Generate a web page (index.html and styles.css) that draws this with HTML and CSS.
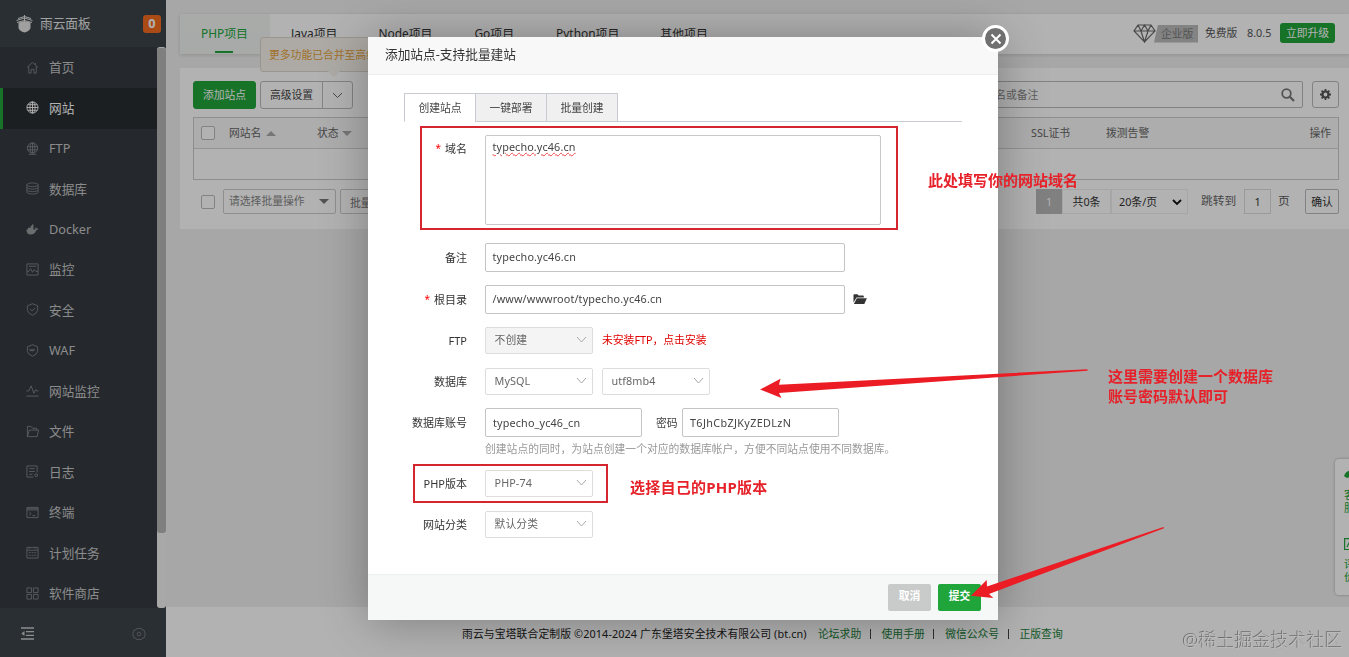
FILE: index.html
```html
<!DOCTYPE html>
<html lang="zh-CN">
<head>
  <meta charset="UTF-8">
  <title>雨云面板</title>
  <link rel="stylesheet" href="styles.css">
</head>
<body>
  <div class="app">
    <aside class="sidebar">
      <div class="logo">
        <svg width="17" height="18" viewBox="0 0 17 18"><path d="M2.500 7.500 8.500 6l6 1.500v5.500q-1 3-6 4.500Q3.500 16 2.500 13z" fill="#e4e4e4"/><path d="M.5 5.500 8.500 3l8 2.500M2 3.500 8.500 1.500 15 3.500M8.500 0v6M1 7.500l7.500-2 7.500 2" fill="none" stroke="#e4e4e4"/></svg>
        <span class="name">雨云面板</span>
        <span class="msg">0</span>
      </div>
      <div class="menu">
        <ul>
          <li><svg viewBox="0 0 14 14"><path d="M1 7 7 1.500 13 7M3 6v7h2.500V9h3v4H11V6M10 2v2"/></svg>首页</li>
          <li class="active"><svg viewBox="0 0 14 14"><circle cx="7" cy="7" r="6"/><ellipse cx="7" cy="7" rx="2.800" ry="6"/><path d="M7 1v12M1 7h12M2 4h10M2 10h10"/></svg>网站</li>
          <li><svg viewBox="0 0 14 14"><circle cx="7" cy="6.500" r="5.500"/><ellipse cx="7" cy="6.500" rx="2.500" ry="5.500"/><path d="M1.500 5h11M1.500 8.500h11M3 13.300h8M7 1v11"/></svg>FTP</li>
          <li><svg viewBox="0 0 14 14"><ellipse cx="7" cy="3" rx="6" ry="2"/><path d="M1 3v8c0 2.600 12 2.600 12 0V3M1 5.700c0 2.600 12 2.600 12 0M1 8.400c0 2.600 12 2.600 12 0"/></svg>数据库</li>
          <li><svg viewBox="0 0 14 14"><path d="M.5 7H10q.3-1.500-.3-2.500 1.500.3 1.800 1.500 1.200-.2 2 .3-.8 1.500-2.500 1.500-1.500 4.700-6 4.700Q.5 12.500.5 7zM2 5h6v2H2zM5 3h3v2H5zM6.500 1.500H8V3H6.500z" fill="#9a9d9f" stroke="none"/></svg>Docker</li>
          <li><svg viewBox="0 0 14 14"><path d="M1 1h12v12H1zM1 9h2l2-3 2 4 2-3 1.500 2H13M3 3.500h8"/></svg>监控</li>
          <li><svg viewBox="0 0 14 14"><path d="M7 .8 12.500 3v5Q11.500 11.500 7 13.200 2.500 11.500 1.500 8V3zM4.500 6.500l2 2 3.200-3"/></svg>安全</li>
          <li><svg viewBox="0 0 14 14"><path d="M7 .8 12.500 3v5Q11.500 11.500 7 13.200 2.500 11.500 1.500 8V3zM4 5.200l.8 2.500.9-2 .8 2 .9-2 .8 2 .8-2.500"/></svg>WAF</li>
          <li><svg viewBox="0 0 14 14"><path d="M.5 13h13M.5 7.500H3l2.500-5.500 3 8L10.500 6l1 1.500h2"/></svg>网站监控</li>
          <li><svg viewBox="0 0 14 14"><path d="M1.500 12.500V1.500h4L7 3.500h4.500V5.500M1.500 12.500 3.500 5.500h10L12 12.500z"/></svg>文件</li>
          <li><svg viewBox="0 0 14 14"><path d="M12 8V1H1v12h7M3.500 4h6M3.500 7h6M3.500 10H7"/><circle cx="11" cy="11" r="1.500"/></svg>日志</li>
          <li><svg viewBox="0 0 14 14"><path d="M1 1.500h12v11H1zM1 3h12M1 4.200h12M3.500 6.500l2 1.700-2 1.800M7 10.300h3"/></svg>终端</li>
          <li><svg viewBox="0 0 14 14"><path d="M1 1.500h12v11.500H1zM1 4.500h12M3 7.200h2M6 7.200h2M9 7.200h2M3 10h2M6 10h2M9 10h2M4 1.500v1.500M10 1.500v1.500"/></svg>计划任务</li>
          <li><svg viewBox="0 0 14 14"><path d="M1 1h5v5H1zM8 1h5v5H8zM1 8h5v5H1zM8 8h5v5H8z"/></svg>软件商店</li>
        </ul>
        <div class="scrollbar"><div class="thumb"></div></div>
      </div>
      <div class="side-foot">
        <svg width="13" height="13" viewBox="0 0 13 13"><path d="M0 1h13M5 4.700h8M5 8.300h8M0 12h13" stroke="#c8caca" stroke-width="1.300"/><path d="M3.500 4v5L.3 6.500z" fill="#c8caca"/></svg>
        <svg width="14" height="14" viewBox="0 0 14 14"><path d="M4.500 1.500h5l.8 1.500h1.700L13.300 7 12 11h-1.700l-.8 1.500h-5L3.700 11H2L.7 7 2 3h1.700z" fill="none" stroke="#717679"/><circle cx="7" cy="7" r="1.800" fill="none" stroke="#717679"/></svg>
      </div>
    </aside>

    <div class="main">
      <div class="topbar">
        <div class="tabs">
          <span class="on">PHP项目</span><span>Java项目</span><span>Node项目</span><span>Go项目</span><span>Python项目</span><span>其他项目</span>
        </div>
        <div class="version">
          <svg width="23" height="19" viewBox="0 0 23 19"><path d="M5 1h13l4 6-10.500 11L1 7zM1 7h21M5 1l3 6 3.500 11L15 7l3-6M8 7l3.500-6L15 7" fill="none" stroke="#6b6b6b" stroke-width="1.200"/></svg>
          <span class="ent">企业版</span>
          <span class="free">免费版</span>
          <span class="num">8.0.5</span>
          <span class="upgrade">立即升级</span>
        </div>
      </div>

      <div class="card">
        <div class="tip">更多功能已合并至高级</div>
        <div class="tools">
          <button class="btn green">添加站点</button>
          <button class="btn setting">高级设置</button>
          <button class="btn more"><svg width="11" height="7" viewBox="0 0 11 7"><path d="M1 1l4.500 4.500L10 1" fill="none" stroke="#666"/></svg></button>
          <div class="search">
            <span>请输入域名或备注</span>
            <svg width="14" height="14" viewBox="0 0 14 14"><circle cx="5.500" cy="5.500" r="4.300" fill="none" stroke="#777" stroke-width="1.800"/><path d="M8.800 8.800 13 13" stroke="#777" stroke-width="2.200"/></svg>
          </div>
          <div class="gear"><svg width="11" height="11" viewBox="0 0 11 11"><circle cx="5.500" cy="5.500" r="3" fill="none" stroke="#555" stroke-width="2.200"/><path d="M5.500 0v2M5.500 9v2M0 5.500h2M9 5.500h2M1.600 1.600l1.200 1.200M8.200 8.200l1.200 1.200M1.600 9.400l1.200-1.200M8.200 2.800l1.200-1.200" stroke="#555" stroke-width="1.800"/></svg></div>
        </div>
        <div class="table">
          <div class="thead">
            <i class="check"></i>
            <span class="c-name">网站名 <i class="up"></i></span>
            <span class="c-status">状态 <i class="down"></i></span>
            <span class="c-ssl">SSL证书</span>
            <span class="c-alarm">拨测告警</span>
            <span class="c-op">操作</span>
          </div>
        </div>
        <div class="batch">
          <i class="check"></i>
          <div class="bsel">请选择批量操作<i class="down"></i></div>
          <div class="bbtn">批量操作</div>
          <div class="page">
            <span class="cur">1</span>
            <span class="total">共0条</span>
            <span class="size">20条/页 <svg width="10" height="7" viewBox="0 0 10 7"><path d="M1 1l4 4 4-4" fill="none" stroke="#111" stroke-width="1.800"/></svg></span>
            <span class="jump">跳转到</span>
            <span class="pnum">1</span>
            <span class="ye">页</span>
            <span class="ok">确认</span>
          </div>
        </div>
      </div>

      <footer class="footer">
        <span class="copy">雨云与宝塔联合定制版 ©2014-2024 广东堡塔安全技术有限公司 (bt.cn)</span>
        <a>论坛求助</a><i></i><a>使用手册</a><i></i><a>微信公众号</a><i></i><a>正版查询</a>
      </footer>
    </div>
  </div>

  <div class="kefu">
    <svg width="14" height="12" viewBox="0 0 14 12"><path d="M0 6q2-5.500 7-5.500T14 6l-3 2Q7 2.500 5 6v1l-1 1q-2 0-4-2zM2 8l2 3" fill="#20a53a"/></svg>
    <p>客服</p>
    <svg class="s2" width="12" height="12" viewBox="0 0 12 12"><path d="M.6.6h11v11H.6zM3 9l2-4 2 4" fill="none" stroke="#20a53a" stroke-width="1.200"/></svg>
    <p>评价</p>
  </div>

  <div class="shade"></div>

  <div class="modal">
    <div class="title">添加站点-支持批量建站</div>
    <div class="close"><svg width="12" height="12" viewBox="0 0 12 12"><path d="M1.500 1.500l9 9M10.500 1.500l-9 9" stroke="#fff" stroke-width="2"/></svg></div>
    <div class="body">
      <div class="mtabs"><span class="on">创建站点</span><span>一键部署</span><span>批量创建</span></div>
      <div class="row r-domain">
        <label><b>*</b>域名</label>
        <div class="area"><span>typecho.yc46.cn</span></div>
      </div>
      <div class="row r-ps">
        <label>备注</label>
        <div class="input long">typecho.yc46.cn</div>
      </div>
      <div class="row r-path">
        <label><b>*</b>根目录</label>
        <div class="input long">/www/wwwroot/typecho.yc46.cn</div>
        <svg class="folder" width="14" height="11" viewBox="0 0 14 11"><path d="M.5 8.500V1q0-.7.700-.7h3.300l1 1.200h4.500q.8 0 .8.800v1.200H3.500z" fill="#333"/><path d="M3.800 4.300h10L11.300 10H.9z" fill="#333"/></svg>
      </div>
      <div class="row r-ftp">
        <label>FTP</label>
        <div class="select disabled">不创建<svg class="arr" viewBox="0 0 11 7"><path d="M1 1l4.500 5L10 1"/></svg></div>
        <span class="warn">未安装FTP，点击安装</span>
      </div>
      <div class="row r-db">
        <label>数据库</label>
        <div class="select">MySQL<svg class="arr" viewBox="0 0 11 7"><path d="M1 1l4.500 5L10 1"/></svg></div>
        <div class="select second">utf8mb4<svg class="arr" viewBox="0 0 11 7"><path d="M1 1l4.500 5L10 1"/></svg></div>
      </div>
      <div class="row r-user">
        <label>数据库账号</label>
        <div class="input account">typecho_yc46_cn</div>
        <span class="pw">密码</span>
        <div class="input account wide">T6JhCbZJKyZEDLzN</div>
      </div>
      <div class="help">创建站点的同时，为站点创建一个对应的数据库帐户，方便不同站点使用不同数据库。</div>
      <div class="row r-php">
        <label>PHP版本</label>
        <div class="select">PHP-74<svg class="arr" viewBox="0 0 11 7"><path d="M1 1l4.500 5L10 1"/></svg></div>
      </div>
      <div class="row r-type">
        <label>网站分类</label>
        <div class="select">默认分类<svg class="arr" viewBox="0 0 11 7"><path d="M1 1l4.500 5L10 1"/></svg></div>
      </div>
    </div>
    <div class="foot"><button class="cancel">取消</button><button class="submit">提交</button></div>
  </div>

  <!-- 标注 -->
  <div class="mark m-domain"></div>
  <div class="mark m-php"></div>
  <p class="note n-domain">此处填写你的网站域名</p>
  <p class="note n-db">这里需要创建一个数据库<br>账号密码默认即可</p>
  <p class="note n-php">选择自己的PHP版本</p>
  <svg class="arrows" width="1349" height="657" viewBox="0 0 1349 657">
    <path d="M760 389.500 780.500 378.700 779 384.700 1087.500 369.300V370.700L779 393 781.500 398z"/>
    <path d="M971 595.700 986.700 580 987 586.500 1163.500 527 1164 528.300 989 594 993.300 598z"/>
  </svg>
  <div class="watermark">@稀土掘金技术社区</div>
</body>
</html>
```
FILE: styles.css
```css
* { box-sizing: border-box; }
body { margin: 0; width: 1349px; height: 657px; overflow: hidden; position: relative; background: #f0f0f0; color: #555; font: 10.8px/16px "Noto Sans", "Noto Sans CJK SC", sans-serif; white-space: nowrap; }
p, ul { margin: 0; padding: 0; }
li { list-style: none; }
button { font: inherit; padding: 0; }
.app { display: flex; height: 657px; }

/* 左侧菜单 */
.sidebar { width: 166px; flex: none; display: flex; flex-direction: column; background: #3d4449; color: #c8c8c8; font-size: 12.7px; }
.logo { height: 47px; display: flex; align-items: center; padding: 0 5px 0 16px; }
.logo .name { margin: -2px 0 0 7px; color: #e8e8e8; }
.logo .msg { margin-left: auto; width: 18px; height: 18px; border-radius: 3px; background: #f46b1d; color: #fff; font-weight: bold; line-height: 17px; text-align: center; }
.menu { height: 561px; display: flex; background: #353b42; }
.menu ul { width: 157px; padding-top: 1px; }
.menu li { height: 40.46px; display: flex; align-items: center; padding: 0 0 2px 26px; }
.menu li svg { width: 13px; height: 13px; margin: 0 10px 0 0; fill: none; stroke: #80868a; }
.menu li.active { background: #282d32; color: #fff; box-shadow: inset 3px 0 #20a53a; }
.menu li.active svg { stroke: #fff; }
.scrollbar { width: 9px; padding-top: 1px; background: #f1f1f1; border-radius: 3px; }
.thumb { height: 485px; background: #b7b7b7; border-radius: 3px; }
.side-foot { flex: 1; display: flex; align-items: center; justify-content: space-between; padding: 2px 20px 0 21px; }

/* 顶部 */
.main { flex: 1; display: flex; flex-direction: column; padding-top: 14px; }
.topbar { height: 40px; margin-left: 14px; display: flex; justify-content: space-between; background: #fff; box-shadow: 0 1px 4px rgba(0,0,0,.15); }
.tabs { display: flex; color: #333; font-size: 11.9px; }
.tabs span { padding: 0 20px 0 21px; line-height: 39px; }
.tabs .on { width: 90px; padding: 0 0 0 21px; color: #20a53a; background: linear-gradient(#f3f5f4, #eff4f0); }
.tabs .on::after { content: ""; display: block; width: 18px; height: 2px; margin: -2px 0 0 14px; background: #20a53a; }
.tabs span:nth-child(4), .tabs span:nth-child(5) { padding-left: 22px; }
.version { display: flex; align-items: center; padding: 0 14px 2px 0; }
.ent { width: 44px; height: 18px; margin: 1px 7px 0 -2px; line-height: 18px; padding-left: 7px; background: #bcbcbc; color: #777; clip-path: polygon(4px 0, 100% 0, 100% 100%, 0 100%); }
.free { width: 42px; }
.num { width: 33px; }
.upgrade { width: 55px; height: 20px; line-height: 19px; border-radius: 3px; background: #20a53a; color: #fff; text-align: center; }

/* 内容 */
.card { position: relative; height: 161px; margin: 14px 0 0 14px; padding: 13px 10px 0 13px; background: #fff; }
.tip { position: absolute; left: 80px; top: -31px; width: 150px; height: 35px; padding-left: 8px; line-height: 34px; background: #f8f4ec; border: 1px solid #ddd7cd; border-radius: 3px; color: #e6a23c; }
.tip::after { content: ""; position: absolute; left: 67px; top: 33px; border: 6px solid transparent; border-top-color: #f8f4ec; }
.tools { display: flex; height: 28px; }
.btn { height: 28px; border: 1px solid #bbb; border-radius: 3px; background: #fff; color: #444; }
.btn.green { width: 63px; margin-right: 4px; background: #20a53a; border-color: #20a53a; color: #fff; }
.btn.setting { width: 63px; border-radius: 3px 0 0 3px; }
.btn.more { width: 31px; margin-left: -1px; border-radius: 0 3px 3px 0; }
.search { width: 352px; height: 27px; margin: 0 9px 0 auto; display: flex; align-items: center; justify-content: space-between; padding: 0 7px 0 0; border: 1px solid #bbb; border-radius: 2px; color: #888; }
.gear { width: 27px; height: 27px; display: flex; align-items: center; justify-content: center; border: 1px solid #bbb; border-radius: 3px; }
.table { height: 63px; margin-top: 8px; border: 1px solid #ccc; color: #666; }
.thead { height: 31px; display: flex; align-items: center; padding: 0 7px; border-bottom: 1px solid #d5d5d5; background: #f8f8f8; }
.check { width: 14px; height: 14px; flex: none; border: 1px solid #bbb; border-radius: 2px; background: #fff; }
.up, .down { display: inline-block; border: 5px solid transparent; vertical-align: middle; }
.up { border-bottom-color: #aaa; margin: -7px 0 0 2px; }
.down { border-top-color: #aaa; margin: 4px 0 0 1px; }
.c-name { width: 88px; margin-left: 14px; }
.c-status { width: 714px; }
.c-ssl { width: 75px; }
.c-op { margin-left: auto; }
.batch { display: flex; align-items: center; height: 25px; margin-top: 9px; padding-left: 8px; }
.bsel { width: 113px; height: 25px; line-height: 21px; margin: 0 4px 0 8px; padding: 0 6px 0 5px; display: flex; justify-content: space-between; border: 1px solid #ccc; border-radius: 2px; color: #888; }
.bsel .down { border-top-color: #777; margin-top: 9px; }
.bbtn { width: 60px; height: 25px; line-height: 25px; padding-left: 9px; border: 1px solid #ccc; border-radius: 2px; color: #777; }
.page { display: flex; margin-left: auto; line-height: 25px; color: #333; }
.page span { height: 25px; }
.page .cur { width: 26px; background: #b8b8b8; color: #fff; text-align: center; }
.page .total { width: 49px; text-align: center; border: 1px solid #eee; line-height: 24px; }
.page .size { width: 77px; padding-left: 7px; border: 1px solid #eee; line-height: 24px; }
.size svg { margin-left: 12px; }
.page .jump { width: 56px; padding-left: 13px; color: #666; line-height: 23px; font-size: 11.7px; }
.page .pnum { width: 27px; border: 1px solid #ddd; text-align: center; line-height: 24px; }
.page .ye { width: 34px; padding-left: 7px; line-height: 23px; color: #555; font-size: 11.7px; }
.page .ok { width: 34px; border: 1px solid #bbb; border-radius: 2px; text-align: center; line-height: 23px; }
.footer { height: 50px; margin-top: auto; display: flex; align-items: center; padding: 3px 0 0 296px; background: #fff; color: #222; }
.copy { width: 356px; letter-spacing: .12px; }
.footer a { color: #20803a; }
.footer i { width: 1px; height: 10px; margin: 0 11px 0 8.4px; background: #444; }
.kefu { position: absolute; left: 1335px; top: 459px; width: 40px; height: 136px; padding: 11px 0 0 9px; background: #fff; border-radius: 4px; box-shadow: 0 0 3px rgba(0,0,0,.3); color: #20a53a; line-height: 13px; }
.kefu svg { display: block; margin-bottom: 6px; }
.kefu p { width: 12px; white-space: normal; }
.kefu .s2 { margin: 24px 0 7px; }

/* 弹窗 */
.shade { position: fixed; left: 0; top: 0; width: 100%; height: 100%; background: #000; opacity: .3; }
.modal { position: absolute; left: 368px; top: 37px; width: 630px; height: 583px; display: flex; flex-direction: column; background: #fff; box-shadow: 1px 1px 45px rgba(0,0,0,.3); color: #444; }
.title { height: 38px; padding-left: 17px; line-height: 35px; font-size: 12.7px; background: #f8f8f8; border-bottom: 1px solid #eee; color: #333; }
.close { position: absolute; right: -11px; top: -12px; width: 27px; height: 27px; display: flex; align-items: center; justify-content: center; border: 3px solid #fff; border-radius: 50%; background: #707070; }
.body { flex: 1; padding-top: 18px; }
.mtabs { width: 558px; height: 29px; margin-left: 36px; display: flex; border-bottom: 1px solid #c8ccd2; }
.mtabs span { width: 72px; height: 29px; margin-right: -1px; line-height: 28px; text-align: center; background: #f0f0f1; border: 1px solid #c8ccd2; }
.mtabs .on { background: #fff; border-bottom-color: #fff; }
.row { display: flex; align-items: center; }
.row label { width: 99px; margin-right: 18px; text-align: right; color: #333; font-size: 11px; }
.row label b { margin-right: 4px; color: #f00; font-weight: normal; font-size: 10px; vertical-align: 1px; }
.r-domain { align-items: flex-start; margin-top: 13px; }
.r-domain label { margin-top: 5px; }
.area { width: 396px; height: 90px; padding: 3px 6.5px; border: 1px solid #c8c8cc; border-radius: 2px; letter-spacing: .12px; }
.area span { text-decoration: underline wavy #e44 .6px; text-underline-offset: 1px; }
.input { width: 157px; height: 29px; padding-left: 7px; line-height: 26px; border: 1px solid #c4c4c4; border-radius: 2px; letter-spacing: .15px; }
.input.long { width: 360px; line-height: 25px; padding-left: 6.5px; }
.input.account { line-height: 27px; }
.input.wide { letter-spacing: .36px; }
.folder { margin-left: 8px; }
.r-ps { margin-top: 18px; }
.r-path, .r-ftp { margin-top: 13px; }
.select { width: 108px; height: 27px; padding: 0 5px 2px 8.5px; display: flex; align-items: center; justify-content: space-between; border: 1px solid #ddd; border-radius: 2px; color: #666; letter-spacing: .1px; }
.select.disabled { background: #f4f4f4; }
.select.second { margin-left: 9px; }
.arr { width: 11px; height: 7px; fill: none; stroke: #aaa; }
.warn { margin: -2px 0 0 9px; color: #e00000; }
.r-db { margin-top: 14px; }
.r-user { margin-top: 13px; }
.pw { width: 22px; margin: 0 4px 0 14px; }
.help { height: 16px; margin: 4px 0 0 117px; color: #999; }
.r-php { margin-top: 13px; }
.r-type { margin-top: 14px; }
.foot { height: 46px; display: flex; justify-content: flex-end; padding: 9px 17px 0 0; background: #f6f8f8; border-top: 1px solid #edf0f0; }
.foot button { width: 43px; height: 27px; margin-left: 7px; padding-bottom: 3px; border: 0; border-radius: 2px; color: #fff; font-weight: bold; }
.cancel { background: #c9cbcb; }
.submit { background: #20a53a; }

.mark { position: absolute; border: 2px solid #d5262f; }
.m-domain { left: 420px; top: 126px; width: 478px; height: 104px; }
.m-php { left: 413px; top: 464px; width: 195px; height: 39px; }
.note { position: absolute; color: #e62129; font-size: 15px; line-height: 19.5px; font-weight: bold; }
.n-domain { left: 928px; top: 171px; }
.n-db { left: 1108px; top: 367px; }
.n-php { left: 630px; top: 478px; letter-spacing: .25px; }
.arrows { position: absolute; left: 0; top: 0; fill: #ec1c24; }
.watermark { position: absolute; left: 1183px; top: 628px; font-size: 18px; line-height: 24px; font-weight: 300; color: #bdbdbd; text-shadow: -1px -1px 0 #6e6e6e; }
```
